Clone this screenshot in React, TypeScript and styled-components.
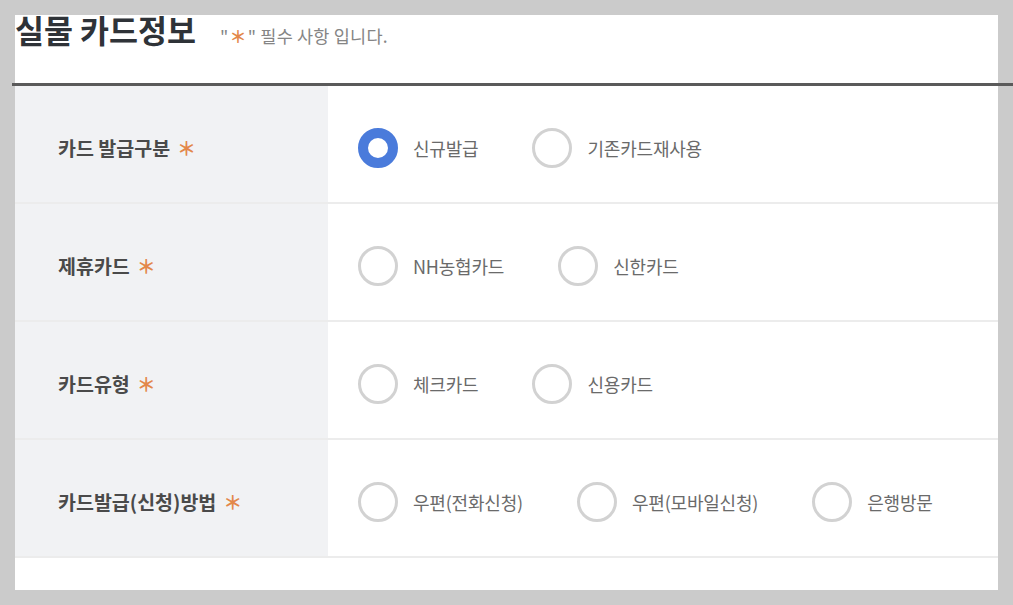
import React from "react";
import styled, { createGlobalStyle } from "styled-components";

const Global = createGlobalStyle`
  html, body { margin: 0; padding: 0; background: #cbcbcb; }
  body { font-family: "Noto Sans CJK KR", "Noto Sans", sans-serif; }
`;

const Page = styled.div`
  width: 1013px;
  height: 605px;
  padding: 15px;
  box-sizing: border-box;
  overflow: hidden;
`;

const Panel = styled.div`
  width: 983px;
  height: 575px;
  background: #fff;
  display: flex;
  flex-direction: column;
`;

const Header = styled.div`
  display: flex;
  align-items: baseline;
  gap: 24px;
  height: 68px;
`;

const Title = styled.h1`
  margin: -4px 0 0 0;
  font-size: 31.5px;
  line-height: 36px;
  font-weight: 700;
  color: #2f3338;
`;

const Note = styled.span`
  font-size: 17.5px;
  color: #858585;
  letter-spacing: 0.2px;
`;

const Star = styled.span<{ $size?: number }>`
  color: #e3874a;
  font-size: ${(p) => p.$size ?? 16}px;
  font-weight: 700;
  margin: 0 1px;
`;

const Divider = styled.div`
  height: 3px;
  background: #5a5a5a;
  margin: 0 -15px 0 -3px;
`;

const Row = styled.div`
  display: flex;
  height: 116px;
  border-bottom: 2px solid #ececec;
`;

const LabelCell = styled.div`
  width: 313px;
  background: #f1f2f4;
  display: flex;
  align-items: center;
  padding: 7px 0 0 43px;
  box-sizing: border-box;
  font-size: 19.5px;
  font-weight: 700;
  color: #4a4a4a;
  gap: 6px;
`;

const OptionCell = styled.div`
  flex: 1;
  display: flex;
  align-items: center;
  padding: 7px 0 0 30px;
  gap: 54px;
`;

const Option = styled.label`
  display: flex;
  align-items: center;
  gap: 15px;
  font-size: 18px;
  letter-spacing: -0.2px;
  color: #6a6a6a;
`;

const Circle = styled.span<{ $checked?: boolean }>`
  width: 40px;
  height: 40px;
  border-radius: 50%;
  box-sizing: border-box;
  background: #fff;
  border: ${(p) => (p.$checked ? "10px solid #4a7bdb" : "3px solid #d2d2d2")};
  flex: none;
`;

const Footer = styled.div`
  flex: 1;
`;

const rows: { label: string; options: string[]; checked?: number }[] = [
  { label: "카드 발급구분", options: ["신규발급", "기존카드재사용"], checked: 0 },
  { label: "제휴카드", options: ["NH농협카드", "신한카드"] },
  { label: "카드유형", options: ["체크카드", "신용카드"] },
  { label: "카드발급(신청)방법", options: ["우편(전화신청)", "우편(모바일신청)", "은행방문"] },
];

export default function App() {
  return (
    <>
      <Global />
      <Page>
        <Panel>
          <Header>
            <Title>실물 카드정보</Title>
            <Note>
              "<Star $size={17}>＊</Star>" 필수 사항 입니다.
            </Note>
          </Header>
          <Divider />
          {rows.map((r) => (
            <Row key={r.label}>
              <LabelCell>
                {r.label}
                <Star $size={19}>＊</Star>
              </LabelCell>
              <OptionCell>
                {r.options.map((o, i) => (
                  <Option key={o}>
                    <Circle $checked={r.checked === i} />
                    {o}
                  </Option>
                ))}
              </OptionCell>
            </Row>
          ))}
          <Footer />
        </Panel>
      </Page>
    </>
  );
}
